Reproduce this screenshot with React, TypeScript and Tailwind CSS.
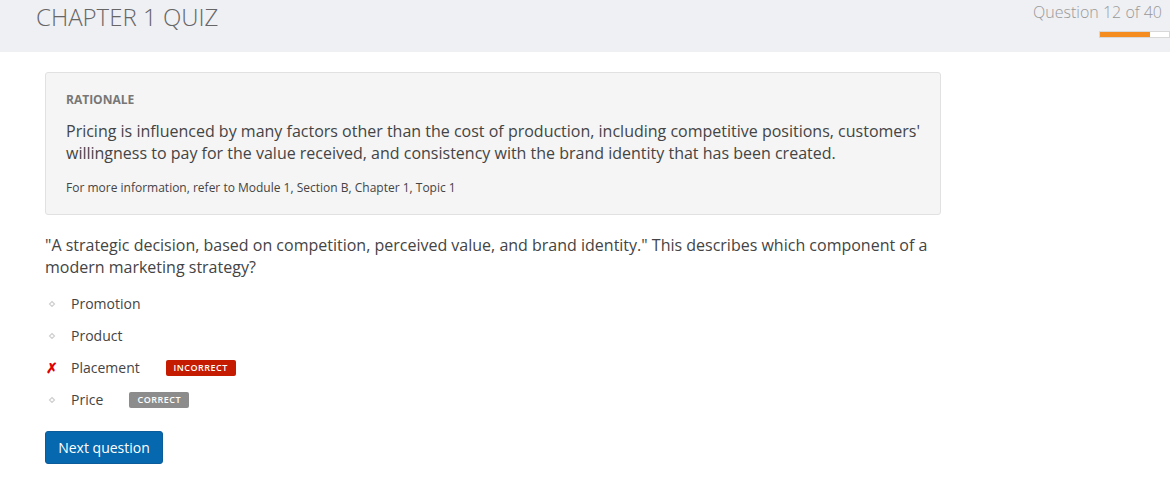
import React from "react";

const options = [
  { label: "Promotion", status: "none" },
  { label: "Product", status: "none" },
  { label: "Placement", status: "incorrect" },
  { label: "Price", status: "correct" },
];

function Bullet() {
  return (
    <svg width="8" height="8" viewBox="0 0 8 8" className="ml-[3px]">
      <path d="M4 1.5 L6.5 4 L4 6.5 L1.5 4 Z" fill="none" stroke="#cfcfcf" strokeWidth="1.2" />
    </svg>
  );
}

function Cross() {
  return (
    <span className="ml-[1px] text-[14px] font-bold leading-5 text-[#e00000]">✗</span>
  );
}

export default function App() {
  return (
    <div className="min-h-[485px] bg-white font-['Open_Sans',sans-serif] text-[#444]">
      {/* header */}
      <div className="flex h-[52px] items-start justify-between bg-[#eff0f4]">
        <h1 className="ml-[36px] mt-[1px] text-[24px] font-light leading-8 text-[#666]">
          CHAPTER 1 QUIZ
        </h1>
        <div className="flex flex-col items-end">
          <span className="mr-[8px] mt-[2px] text-[16px] font-light leading-5 text-[#999]">
            Question 12 of 40
          </span>
          <div className="mt-[9px] h-[7px] w-[71px] border border-[#d8d8d8] bg-white">
            <div className="h-full w-[50px] bg-[#f48c1f]" />
          </div>
        </div>
      </div>

      <div className="ml-[45px] w-[896px]">
        {/* rationale */}
        <div className="mt-[20px] rounded-[3px] border border-[#e1e1e1] bg-[#f5f5f5] px-[20px] pb-[18px] pt-[19px]">
          <div className="text-[12px] font-bold leading-4 text-[#777]">RATIONALE</div>
          <p className="mt-[12px] text-[16px] leading-[22px] text-[#444]">
            Pricing is influenced by many factors other than the cost of production, including
            competitive positions, customers' willingness to pay for the value received, and
            consistency with the brand identity that has been created.
          </p>
          <p className="mt-[16px] text-[12px] leading-4 text-[#444]">
            For more information, refer to Module 1, Section B, Chapter 1, Topic 1
          </p>
        </div>

        {/* question */}
        <p className="mt-[19px] text-[16px] leading-[22px] text-[#444]">
          "A strategic decision, based on competition, perceived value, and brand identity." This
          describes which component of a modern marketing strategy?
        </p>

        <ul className="mt-[16px] flex flex-col gap-3">
          {options.map((o) => (
            <li key={o.label} className="flex h-5 items-center">
              <span className="flex w-[26px] items-center">
                {o.status === "incorrect" ? <Cross /> : <Bullet />}
              </span>
              <span className="text-[14px] leading-5 text-[#444]">{o.label}</span>
              {o.status === "incorrect" && (
                <span className="ml-[26px] flex h-4 w-[70px] items-center justify-center rounded-[2px] bg-[#c51b00] text-[9px] font-semibold tracking-[0.5px] text-white">
                  INCORRECT
                </span>
              )}
              {o.status === "correct" && (
                <span className="ml-[26px] flex h-4 w-[60px] items-center justify-center rounded-[2px] bg-[#8c8c8c] text-[9px] font-semibold tracking-[0.5px] text-white">
                  CORRECT
                </span>
              )}
            </li>
          ))}
        </ul>

        <button className="mt-[21px] h-[33px] w-[118px] rounded-[3px] border border-[#0a5c9a] bg-[#0668ae] text-[14px] text-white">
          Next question
        </button>
      </div>
    </div>
  );
}
